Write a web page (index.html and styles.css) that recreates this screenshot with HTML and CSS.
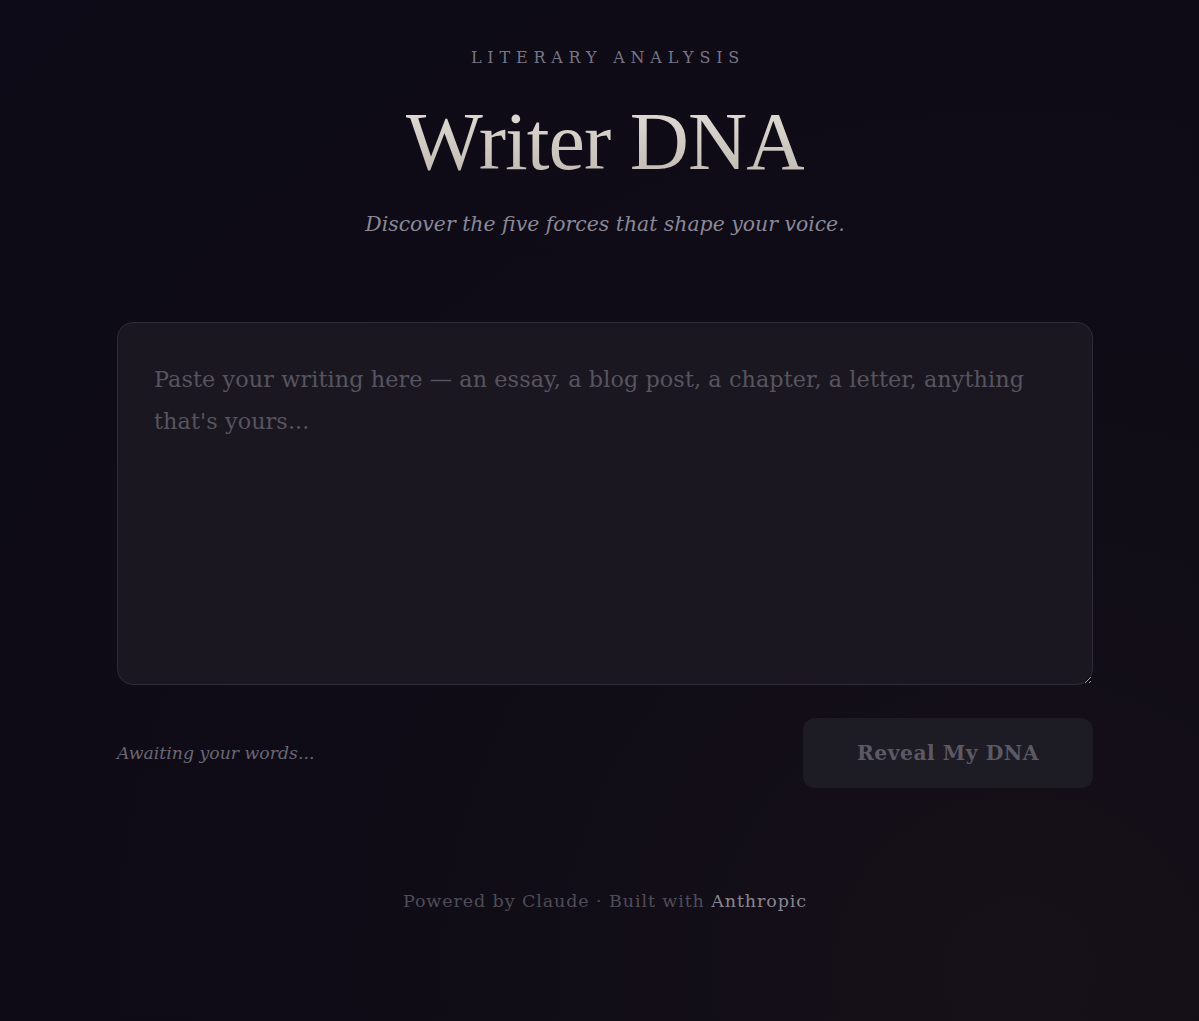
FILE: index.html
```html
<!DOCTYPE html>
<html lang="en">
<head>
<meta charset="utf-8">
<title>Writer DNA</title>
<link rel="stylesheet" href="styles.css">
</head>
<body>
<main class="page">
  <header class="hero">
    <p class="eyebrow">Literary Analysis</p>
    <h1 class="title">Writer DNA</h1>
    <p class="tagline">Discover the five forces that shape your voice.</p>
  </header>
  <section class="composer">
    <textarea class="input" placeholder="Paste your writing here — an essay, a blog post, a chapter, a letter, anything that's yours..."></textarea>
    <div class="actions">
      <span class="status">Awaiting your words...</span>
      <button class="reveal" type="button">Reveal My DNA</button>
    </div>
  </section>
  <footer class="footer">Powered by Claude · Built with <span class="brand">Anthropic</span></footer>
</main>
</body>
</html>
```
FILE: styles.css
```css
html, body {
  margin: 0;
  height: 100%;
}
body {
  box-sizing: border-box;
  padding-left: 11px;
  background: radial-gradient(ellipse at 85% 95%, #161018 0%, #0f0c16 45%, #0d0b17 100%);
  color: #c9c4bd;
  font-family: "DejaVu Serif", serif;
}
.page {
  width: 976px;
  margin: 0 auto;
  padding-top: 48px;
  display: flex;
  flex-direction: column;
}
.hero {
  display: flex;
  flex-direction: column;
  align-items: center;
}
.eyebrow {
  margin: 0;
  padding-left: 6px;
  font-size: 16px;
  letter-spacing: 5.8px;
  text-transform: uppercase;
  color: #777585;
  line-height: 20px;
}
.title {
  margin: 26px 0 0;
  font-family: "Liberation Serif", serif;
  font-weight: 400;
  font-size: 82px;
  line-height: 96px;
  letter-spacing: -1px;
  background: linear-gradient(180deg, #e6e2dc 0%, #bbb4ac 100%);
  -webkit-background-clip: text;
  background-clip: text;
  color: transparent;
}
.tagline {
  margin: 20px 0 0;
  font-style: italic;
  font-size: 20.4px;
  line-height: 28px;
  color: #8b8898;
}
.composer {
  margin-top: 84px;
  display: flex;
  flex-direction: column;
}
.input {
  box-sizing: border-box;
  width: 100%;
  height: 363px;
  padding: 35px 36px;
  border: 1px solid #2f2c38;
  border-radius: 16px;
  background: #1a1720;
  color: #c9c4bd;
  font-family: "DejaVu Serif", serif;
  font-size: 22.3px;
  letter-spacing: 0.1px;
  line-height: 42px;
  resize: vertical;
  outline: none;
}
.input::placeholder {
  color: #57545f;
}
.actions {
  margin-top: 33px;
  display: flex;
  justify-content: space-between;
  align-items: center;
}
.status {
  font-style: italic;
  font-size: 17.3px;
  color: #6a6674;
}
.reveal {
  width: 290px;
  height: 70px;
  border: none;
  border-radius: 12px;
  background: #1d1b23;
  color: #5c5964;
  font-family: "DejaVu Serif", serif;
  font-weight: 700;
  font-size: 20.3px;
  letter-spacing: 0.5px;
}
.footer {
  margin-top: 103px;
  text-align: center;
  font-size: 17.5px;
  letter-spacing: 0.9px;
  color: #4f4c58;
}
.brand {
  color: #8a8694;
}
```
